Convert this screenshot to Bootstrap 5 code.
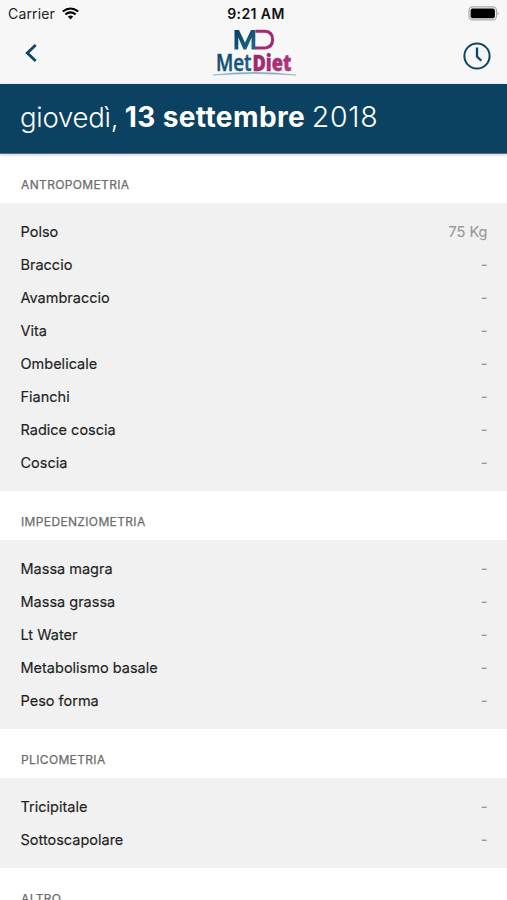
<!DOCTYPE html>
<html lang="it">
<head>
<meta charset="utf-8">
<meta name="viewport" content="width=device-width, initial-scale=1">
<title>MetDiet</title>
<link href="https://cdn.jsdelivr.net/npm/bootstrap@5.3.0/dist/css/bootstrap.min.css" rel="stylesheet">
<style>
body{font-family:Inter,"Liberation Sans",sans-serif;color:#222;height:900px;overflow:hidden;background:#fff}
.app-top{background:#f7f7f7;height:84px}
.status-bar{height:27px;font-size:14px;line-height:27px;padding:0 8px 0 8px;display:grid;grid-template-columns:1fr auto 1fr}
.carrier{letter-spacing:.15px}
.wifi{margin-left:7px}
.nav-row{height:57px;display:grid;grid-template-columns:1fr auto 1fr;padding:0 15px 0 24px}
.brand-logo{margin-right:5px}
.clock-icon{margin-top:14px}
.clock-text{font-weight:600;font-size:14px;letter-spacing:.4px;margin-left:5px;color:#111}
.date-bar{background:#0c4261;height:70px;padding:0 20px 4px;color:#fff;font-size:27.5px;font-weight:300;border-bottom:1px solid #4b7188;box-shadow:0 1px 3px #0003;white-space:nowrap}
.date-text{line-height:36px;letter-spacing:-.25px}
.date-text b{font-weight:700;font-size:28px;letter-spacing:.4px;margin-left:-1px}
.date-text .year{font-size:28.5px;letter-spacing:.8px;margin-left:-1px}
.section-title{height:49px;padding:22px 21px 0;font-size:12px;line-height:18px;letter-spacing:.36px;font-weight:400;color:#6c6c6c;margin:0;-webkit-text-stroke:.25px #6c6c6c}
.measure-box{background:#f1f1f1;padding:12px 19.5px 12px 20.5px}
.measure{height:33px;font-size:14.5px;line-height:33px;margin:0}
.measure dt{font-weight:400;-webkit-text-stroke:.15px #222}
.measure dd{color:#999;margin:0;-webkit-text-stroke:.15px #999}
</style>
<script src="https://cdn.jsdelivr.net/npm/bootstrap@5.3.0/dist/js/bootstrap.bundle.min.js"></script>
</head>
<body>
<header class="app-top">
  <div class="status-bar">
    <div class="d-flex align-items-center"><span class="carrier">Carrier</span>
      <svg class="wifi" width="17" height="13" viewBox="0 0 17 13" fill="none" stroke="#000" stroke-width="2.1"><path d="M.8 4.500Q8.500-1.500 16.200 4.500M3.400 7.400Q8.500 3.200 13.600 7.400"/><path d="M5.800 9.600Q8.500 7.400 11.200 9.600L8.500 12.400Z" fill="#000" stroke="none"/></svg>
    </div>
    <div class="clock-text">9:21 AM</div>
    <div class="d-flex align-items-center justify-content-end">
      <svg width="31" height="15" viewBox="0 0 31 15"><rect x="1" y=".8" width="27.500" height="13" rx="3.600" fill="#f7f7f7" stroke="#aaa" stroke-width="1.200"/><rect x="2.600" y="2.500" width="24.300" height="9.700" rx="2" fill="#000"/><path d="M29.500 5q2 2.300 0 4.600z" fill="#aaa"/></svg>
    </div>
  </div>
  <div class="nav-row">
    <svg class="mt-3" width="15" height="20" viewBox="0 0 15 20" fill="none" stroke="#0c4669" stroke-width="2.800"><path d="M11.700 2L3.300 10l8.400 8"/></svg>
    <svg class="brand-logo" width="86" height="52" viewBox="0 0 86 52" role="img" aria-label="MetDiet">
      <defs>
        <linearGradient id="blue" x2="1" y2="1"><stop stop-color="#0a3e61"/><stop offset="1" stop-color="#216990"/></linearGradient>
        <linearGradient id="pink" x2="1" y2="1"><stop stop-color="#8d2263"/><stop offset="1" stop-color="#bd3b82"/></linearGradient>
      </defs>
      <path d="M42.500 4.300h9.500q7.600.5 7.600 8.300t-7.600 8.400H42" fill="none" stroke="#a32b70" stroke-width="3"/>
      <path d="M21.500 22.500V3h4.500l6 12.800L38 3h4.300v19.500h-3.800V10.500l-5.200 12h-2.800L25.300 10.500v12z" fill="url(#blue)"/>
      <text x="3" y="43.500" font-family="Open Sans, sans-serif" font-size="22.500" fill="url(#blue)" stroke="#14537a" stroke-width=".5" font-weight="600" textLength="35.500" lengthAdjust="spacingAndGlyphs">Met</text>
      <text x="39.400" y="43.500" font-family="Open Sans, sans-serif" font-size="22.500" fill="url(#pink)" stroke="#a32b70" stroke-width=".4" font-weight="800" textLength="39" lengthAdjust="spacingAndGlyphs">Diet</text>
      <path d="M0 48Q42 42.700 83 48Q42 45 0 48Z" fill="#7caabd" stroke="#7caabd" stroke-width=".5"/>
    </svg>
    <svg class="clock-icon ms-auto" width="30" height="30" viewBox="0 0 30 30" fill="none" stroke="#0c4669" stroke-width="2"><circle cx="15" cy="15" r="12.600"/><path d="M15 6.500v9l4.300 4.200" stroke-width="2.300"/></svg>
  </div>
</header>
<main>
  <div class="date-bar d-flex align-items-center"><div class="date-text">giovedì, <b>13 settembre</b> <span class="year">2018</span></div></div>
  <h2 class="section-title">ANTROPOMETRIA</h2>
  <div class="measure-box">
    <dl class="measure d-flex justify-content-between"><dt>Polso</dt><dd>75 Kg</dd></dl>
    <dl class="measure d-flex justify-content-between"><dt>Braccio</dt><dd>-</dd></dl>
    <dl class="measure d-flex justify-content-between"><dt>Avambraccio</dt><dd>-</dd></dl>
    <dl class="measure d-flex justify-content-between"><dt>Vita</dt><dd>-</dd></dl>
    <dl class="measure d-flex justify-content-between"><dt>Ombelicale</dt><dd>-</dd></dl>
    <dl class="measure d-flex justify-content-between"><dt>Fianchi</dt><dd>-</dd></dl>
    <dl class="measure d-flex justify-content-between"><dt>Radice coscia</dt><dd>-</dd></dl>
    <dl class="measure d-flex justify-content-between"><dt>Coscia</dt><dd>-</dd></dl>
  </div>
  <h2 class="section-title">IMPEDENZIOMETRIA</h2>
  <div class="measure-box">
    <dl class="measure d-flex justify-content-between"><dt>Massa magra</dt><dd>-</dd></dl>
    <dl class="measure d-flex justify-content-between"><dt>Massa grassa</dt><dd>-</dd></dl>
    <dl class="measure d-flex justify-content-between"><dt>Lt Water</dt><dd>-</dd></dl>
    <dl class="measure d-flex justify-content-between"><dt>Metabolismo basale</dt><dd>-</dd></dl>
    <dl class="measure d-flex justify-content-between"><dt>Peso forma</dt><dd>-</dd></dl>
  </div>
  <h2 class="section-title">PLICOMETRIA</h2>
  <div class="measure-box">
    <dl class="measure d-flex justify-content-between"><dt>Tricipitale</dt><dd>-</dd></dl>
    <dl class="measure d-flex justify-content-between"><dt>Sottoscapolare</dt><dd>-</dd></dl>
  </div>
  <h2 class="section-title">ALTRO</h2>
</main>
</body>
</html>
